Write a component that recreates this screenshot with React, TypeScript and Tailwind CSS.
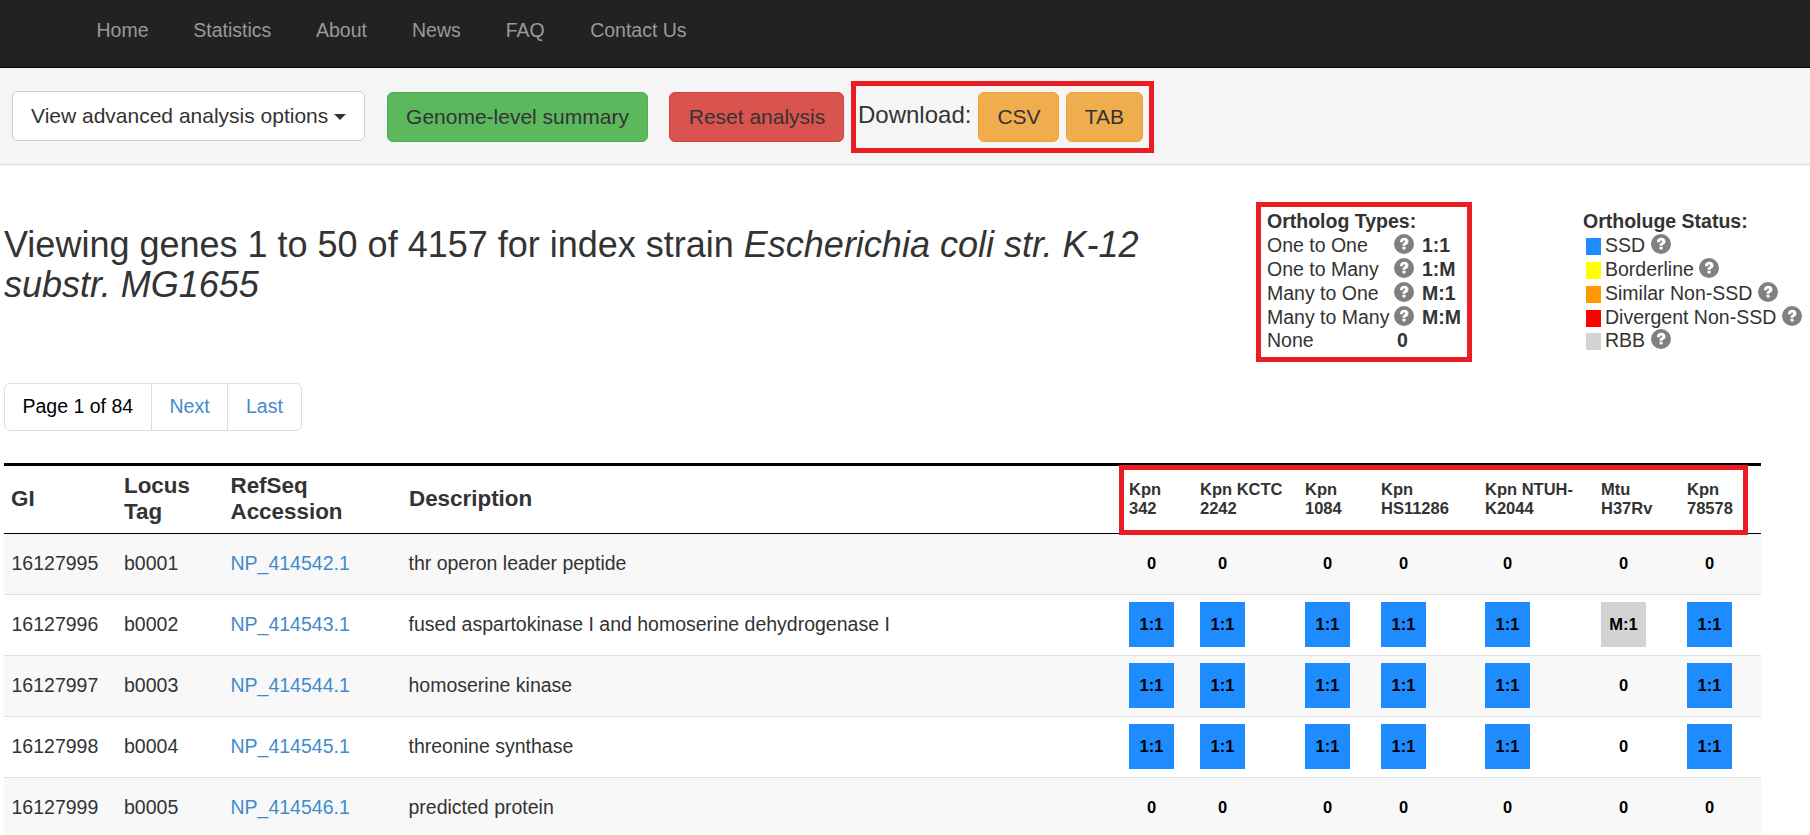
import React from "react";

const NAV = [
  { label: "Home", width: "w-[96.8px]" },
  { label: "Statistics", width: "w-[122.7px]" },
  { label: "About", width: "w-[96px]" },
  { label: "News", width: "w-[93.7px]" },
  { label: "FAQ", width: "w-[84.5px]" },
  { label: "Contact Us", width: "w-[120px]" },
];

const TYPES = [
  { name: "One to One", code: "1:1" },
  { name: "One to Many", code: "1:M" },
  { name: "Many to One", code: "M:1" },
  { name: "Many to Many", code: "M:M" },
];

const STATUSES = [
  { name: "SSD", color: "bg-[#1e8bff]" },
  { name: "Borderline", color: "bg-[#ffff00]" },
  { name: "Similar Non-SSD", color: "bg-[#ff9900]" },
  { name: "Divergent Non-SSD", color: "bg-[#ff0000]" },
  { name: "RBB", color: "bg-[#d3d3d3]" },
];

const STRAINS: [string, string][] = [
  ["Kpn", "342"],
  ["Kpn KCTC", "2242"],
  ["Kpn", "1084"],
  ["Kpn", "HS11286"],
  ["Kpn NTUH-", "K2044"],
  ["Mtu", "H37Rv"],
  ["Kpn", "78578"],
];

const GENES = [
  { gi: "16127995", locus: "b0001", acc: "NP_414542.1", desc: "thr operon leader peptide", cells: ["0", "0", "0", "0", "0", "0", "0"] },
  { gi: "16127996", locus: "b0002", acc: "NP_414543.1", desc: "fused aspartokinase I and homoserine dehydrogenase I", cells: ["1:1", "1:1", "1:1", "1:1", "1:1", "M:1", "1:1"] },
  { gi: "16127997", locus: "b0003", acc: "NP_414544.1", desc: "homoserine kinase", cells: ["1:1", "1:1", "1:1", "1:1", "1:1", "0", "1:1"] },
  { gi: "16127998", locus: "b0004", acc: "NP_414545.1", desc: "threonine synthase", cells: ["1:1", "1:1", "1:1", "1:1", "1:1", "0", "1:1"] },
  { gi: "16127999", locus: "b0005", acc: "NP_414546.1", desc: "predicted protein", cells: ["0", "0", "0", "0", "0", "0", "0"] },
];

const BADGE: Record<string, string> = {
  "0": "",
  "1:1": "bg-[#1e8bff]",
  "M:1": "bg-[#d3d3d3]",
};

function HelpIcon() {
  return (
    <svg width="20" height="20" viewBox="0 0 20 20" className="block shrink-0">
      <circle cx="10" cy="10" r="10" fill="#808080" />
      <path d="M5.9 8.2C5.9 5.2 7.6 3.7 10.2 3.7c2.5 0 4.3 1.4 4.3 3.7 0 2.8-2.9 2.7-2.9 4.4H8.5c0-2.8 2.6-2.8 2.6-4.2 0-.7-.4-1-1-1-.8 0-1.1.5-1.1 1.6z" fill="#fff" />
      <rect x="8.5" y="12.8" width="3.1" height="2.6" fill="#fff" />
    </svg>
  );
}

function Navbar() {
  return (
    <nav className="flex h-[68px] border-b border-black bg-[#222] pl-[96.5px] text-[19.5px] leading-[60px] text-[#999]">
      {NAV.map((n) => (
        <a key={n.label} className={`block whitespace-nowrap ${n.width}`}>{n.label}</a>
      ))}
    </nav>
  );
}

function Toolbar() {
  const btn = "flex h-[50px] items-center justify-center whitespace-nowrap rounded-md border text-[21px]";
  return (
    <div className="flex h-[97px] items-start border-b border-[#ddd] bg-[#f5f5f5] pl-3 pt-[13px] shadow-[0_1px_2px_rgba(0,0,0,0.05)]">
      <button className="mt-[10px] flex h-[50px] w-[353px] items-center rounded-md border border-[#ccc] bg-white pl-[18px] text-[21px]">
        <span className="whitespace-nowrap">View advanced analysis options</span>
        <span className="ml-[6px] mt-px border-x-6 border-t-6 border-x-transparent border-t-[#333]" />
      </button>
      <button className={`${btn} ml-[22px] mt-[11px] w-[261px] border-[#4cae4c] bg-[#5cb85c]`}>Genome-level summary</button>
      <button className={`${btn} ml-[21px] mt-[11px] w-[175px] border-[#d43f3a] bg-[#d9534f] pl-px`}>Reset analysis</button>
      <div className="ml-[7px] flex h-[72px] w-[303px] border-5 border-[#ed1c24]">
        <span className="ml-[2px] mt-[13px] w-[120px] text-[24px] leading-8">Download:</span>
        <button className={`${btn} mt-[6px] w-[81px] border-[#eea236] bg-[#f0ad4e] pl-px`}>CSV</button>
        <button className={`${btn} ml-[7px] mt-[6px] w-[77px] border-[#eea236] bg-[#f0ad4e]`}>TAB</button>
      </div>
    </div>
  );
}

function OrthologTypes() {
  return (
    <section className="h-[160px] w-[216px] border-5 border-[#ed1c24] pl-[6px] pt-[2px] leading-6">
      <h2 className="font-bold">Ortholog Types:</h2>
      {TYPES.map((t) => (
        <div key={t.name} className="flex h-6">
          <span className="w-[127px] whitespace-nowrap">{t.name}</span>
          <span className="mt-px"><HelpIcon /></span>
          <b className="ml-2">{t.code}</b>
        </div>
      ))}
      <div className="-mt-px flex h-6">
        <span className="w-[130px]">None</span>
        <b>0</b>
      </div>
    </section>
  );
}

function OrtholugeStatus() {
  return (
    <section className="ml-[111px] mt-[7px] leading-6">
      <h2 className="font-bold">Ortholuge Status:</h2>
      {STATUSES.map((s) => (
        <div key={s.name} className="flex h-6 pl-[3px] last:-mt-px">
          <span className={`mt-[5px] h-[17px] w-[15px] ${s.color}`} />
          <span className="ml-1 whitespace-nowrap">{s.name}</span>
          <span className="ml-[5.5px] mt-px"><HelpIcon /></span>
        </div>
      ))}
    </section>
  );
}

function Pagination() {
  return (
    <div className="flex h-12 w-[298px] rounded-md border border-[#ddd] leading-[45px] text-[#428bca]">
      <span className="w-[147px] border-r border-[#ddd] pl-[17.5px] text-black">Page 1 of 84</span>
      <a className="w-[76px] border-r border-[#ddd] pl-[17.5px]">Next</a>
      <a className="pl-[18px]">Last</a>
    </div>
  );
}

function GeneTable() {
  return (
    <div className="relative w-[1757px]">
      <table className="w-full table-fixed border-separate border-spacing-0">
        <colgroup>
          <col className="w-[112px]" />
          <col className="w-[107px]" />
          <col className="w-[178px]" />
          <col className="w-[720px]" />
          <col className="w-[71px]" />
          <col className="w-[105px]" />
          <col className="w-[76px]" />
          <col className="w-[104px]" />
          <col className="w-[116px]" />
          <col className="w-[86px]" />
          <col className="w-[82px]" />
        </colgroup>
        <thead>
          <tr className="h-[71px] text-left text-[22.4px] leading-[26px] *:border-b *:border-t-3 *:border-black">
            <th className="pb-px pl-[7px]">GI</th>
            <th className="pb-px pl-2">Locus<br />Tag</th>
            <th className="pb-px pl-[7.5px]">RefSeq<br />Accession</th>
            <th className="pb-px pl-2">Description</th>
            {STRAINS.map(([a, b]) => (
              <th key={a + b} className="whitespace-nowrap pb-px pl-2 text-[16.5px] leading-[19px]">{a}<br />{b}</th>
            ))}
          </tr>
        </thead>
        <tbody>
          {GENES.map((g, i) => (
            <tr key={g.gi} className={`h-[61px] *:border-b *:border-[#ddd] ${i % 2 === 0 ? "bg-[#f8f8f8]" : "bg-white"}`}>
              <td className="py-0 pl-[7.5px]">{g.gi}</td>
              <td className="py-0 pl-2">{g.locus}</td>
              <td className="py-0 pl-[7.5px] text-[#428bca]">{g.acc}</td>
              <td className="py-0 pl-[7.5px]">{g.desc}</td>
              {g.cells.map((c, j) => (
                <td key={j} className="pb-[2px] pl-2">
                  <div className={`flex h-[45px] w-[45px] items-center justify-center text-[16.5px] font-bold text-black ${BADGE[c]}`}>{c}</div>
                </td>
              ))}
            </tr>
          ))}
        </tbody>
      </table>
      <div className="pointer-events-none absolute left-[1115px] top-[2px] h-[70px] w-[629px] border-5 border-[#ed1c24]" />
    </div>
  );
}

export default function App() {
  return (
    <div className="h-[835px] w-[1810px] overflow-hidden bg-white font-['Liberation_Sans',Arial,sans-serif] text-[19.5px] text-[#333]">
      <Navbar />
      <Toolbar />
      <main className="pl-1">
        <div className="flex h-[218px] items-start pt-[37px]">
          <h1 className="mt-[23px] w-[1252px] text-[36px] leading-[39.6px]">
            Viewing genes 1 to 50 of 4157 for index strain <em>Escherichia coli str. K-12<br />substr. MG1655</em>
          </h1>
          <OrthologTypes />
          <OrtholugeStatus />
        </div>
        <div className="h-20">
          <Pagination />
        </div>
        <GeneTable />
      </main>
    </div>
  );
}
